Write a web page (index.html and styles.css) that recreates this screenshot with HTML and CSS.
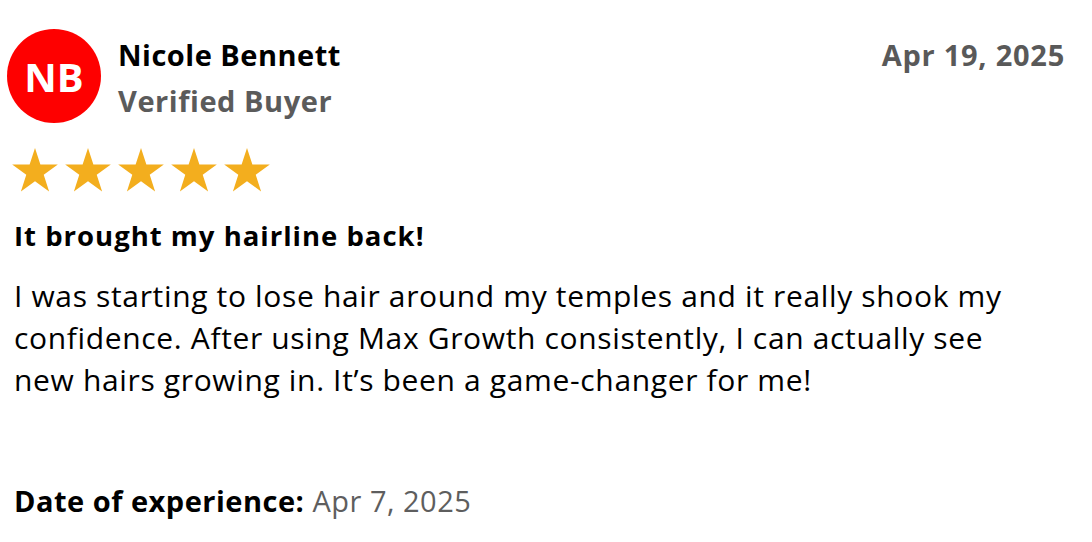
FILE: index.html
```html
<!DOCTYPE html>
<html>
<head>
<meta charset="utf-8">
<link rel="stylesheet" href="styles.css">
</head>
<body>
<div class="review">
  <div class="header">
    <div class="avatar">NB</div>
    <div class="who">
      <div class="name">Nicole Bennett</div>
      <div class="verified">Verified Buyer</div>
    </div>
    <div class="date">Apr 19, 2025</div>
  </div>
  <div class="stars">
    <svg viewBox="0 0 46 44" class="star"><path d="M23 0L28.39 16.58L45.83 16.58L31.72 26.83L37.11 43.42L23 33.17L8.89 43.42L14.28 26.83L0.17 16.58L17.61 16.58Z"/></svg>
    <svg viewBox="0 0 46 44" class="star"><path d="M23 0L28.39 16.58L45.83 16.58L31.72 26.83L37.11 43.42L23 33.17L8.89 43.42L14.28 26.83L0.17 16.58L17.61 16.58Z"/></svg>
    <svg viewBox="0 0 46 44" class="star"><path d="M23 0L28.39 16.58L45.83 16.58L31.72 26.83L37.11 43.42L23 33.17L8.89 43.42L14.28 26.83L0.17 16.58L17.61 16.58Z"/></svg>
    <svg viewBox="0 0 46 44" class="star"><path d="M23 0L28.39 16.58L45.83 16.58L31.72 26.83L37.11 43.42L23 33.17L8.89 43.42L14.28 26.83L0.17 16.58L17.61 16.58Z"/></svg>
    <svg viewBox="0 0 46 44" class="star"><path d="M23 0L28.39 16.58L45.83 16.58L31.72 26.83L37.11 43.42L23 33.17L8.89 43.42L14.28 26.83L0.17 16.58L17.61 16.58Z"/></svg>
  </div>
  <h2 class="title">It brought my hairline back!</h2>
  <p class="body">I was starting to lose hair around my temples and it really shook my<br>confidence. After using Max Growth consistently, I can actually see<br>new hairs growing in. It’s been a game-changer for me!</p>
  <p class="experience"><span class="label">Date of experience:</span> <span class="exp-date">Apr 7, 2025</span></p>
</div>
</body>
</html>
```

FILE: styles.css
```css
html, body {
  margin: 0;
  padding: 0;
  background: #ffffff;
}
body {
  font-family: "Open Sans", "Noto Sans", sans-serif;
  color: #000;
}
.review {
  width: 1092px;
  height: 542px;
  box-sizing: border-box;
  padding: 29px 27px 0 7px;
}
.header {
  display: flex;
  align-items: flex-start;
}
.avatar {
  width: 94px;
  height: 94px;
  border-radius: 50%;
  background: #fe0000;
  color: #fff;
  font-weight: 700;
  font-size: 40px;
  display: flex;
  align-items: center;
  justify-content: center;
  flex: none;
}
.who {
  margin-left: 17px;
  margin-top: 6px;
  flex: 1;
}
.name {
  font-weight: 700;
  font-size: 29px;
  letter-spacing: 0.5px;
  line-height: 40px;
  color: #000;
}
.verified {
  font-weight: 700;
  font-size: 29px;
  letter-spacing: 0.55px;
  line-height: 40px;
  margin-top: 6px;
  color: #5b5b5b;
}
.date {
  margin-top: 6px;
  font-weight: 700;
  font-size: 29px;
  letter-spacing: 0.75px;
  line-height: 40px;
  color: #595959;
}
.stars {
  display: flex;
  gap: 7px;
  margin-top: 25px;
  margin-left: 5px;
}
.star {
  width: 46px;
  height: 44px;
  fill: #f3ae1e;
}
.title {
  margin: 26px 0 0 7px;
  font-size: 27.5px;
  letter-spacing: 1px;
  line-height: 36px;
  font-weight: 700;
}
.body {
  margin: 21px 0 0 7px;
  font-size: 30px;
  letter-spacing: 0.65px;
  line-height: 42px;
}
.experience {
  margin: 80px 0 0 7px;
  font-size: 29px;
  letter-spacing: 0.5px;
  line-height: 40px;
}
.label {
  font-weight: 700;
}
.exp-date {
  color: #5e5e5e;
}
```
